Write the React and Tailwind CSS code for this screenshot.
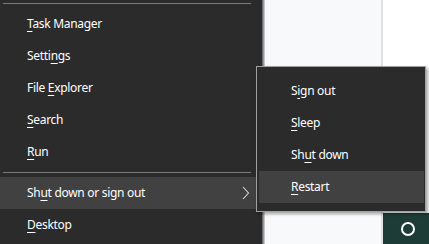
import React from 'react'

// a menu label with one underlined access key
function Label({ text, keyIndex }) {
  return (
    <span>
      {text.slice(0, keyIndex)}
      <span className="underline underline-offset-[3px] decoration-1">{text[keyIndex]}</span>
      {text.slice(keyIndex + 1)}
    </span>
  )
}

const mainItems = [
  { text: 'Task Manager', k: 0 },
  { text: 'Settings', k: 5 },
  { text: 'File Explorer', k: 5 },
  { text: 'Search', k: 0 },
  { text: 'Run', k: 0 },
]

const subItems = [
  { text: 'Sign out', k: 1 },
  { text: 'Sleep', k: 0 },
  { text: 'Shut down', k: 2 },
  { text: 'Restart', k: 0, active: true },
]

export default function App() {
  return (
    <div
      className="relative w-[429px] h-[244px] overflow-hidden bg-white text-white text-[12px] tracking-[-0.3px]"
      style={{ fontFamily: '"Noto Sans", "Open Sans", sans-serif' }}
    >
      <div className="flex h-full">
        {/* main context menu */}
        <div className="w-[262px] h-full bg-[#2b2b2b] flex flex-col">
          <div className="h-px bg-[#7a7a7a] mt-[3px] ml-[3px] w-[248px]" />
          <div className="pt-[4px]">
            {mainItems.map(i => (
              <div key={i.text} className="h-[32px] flex items-center pl-[27px]">
                <Label text={i.text} keyIndex={i.k} />
              </div>
            ))}
          </div>
          <div className="h-px bg-[#7a7a7a] mt-[4px] ml-[3px] w-[248px]" />
          <div className="mt-[4px] h-[32px] flex items-center pl-[27px] bg-[#414141]">
            <Label text="Shut down or sign out" keyIndex={2} />
            <div className="flex-1" />
            <svg width="8" height="14" viewBox="0 0 8 14" className="mr-[12px]">
              <polyline points="1,1 6.5,7 1,13" fill="none" stroke="#d8d8d8" strokeWidth="1.1" />
            </svg>
          </div>
          <div className="h-[32px] flex items-center pl-[27px]">
            <Label text="Desktop" keyIndex={0} />
          </div>
        </div>

        {/* window behind, light strip */}
        <div className="w-[121px] h-full flex">
          <div className="w-[3px] bg-gradient-to-r from-[#5a5a5a] to-[#dcdcdc]" />
          <div className="flex-1 bg-[#f8f9fa]" />
          <div className="w-[2px] bg-[#e2e2e2]" />
        </div>

        <div className="flex-1 flex flex-col">
          <div className="flex-1 bg-white" />
          <div className="h-[31px] bg-[#1d3b37] flex items-center justify-center pl-[3px]">
            <div className="w-[14px] h-[14px] rounded-full border-2 border-white" />
          </div>
        </div>
      </div>

      {/* submenu */}
      <div className="absolute left-[256px] top-[66px] w-[170px] h-[146px] bg-[#2b2b2b] border border-[#a0a0a0] shadow-[2px_2px_3px_rgba(0,0,0,0.35)] pt-[8px]">
        {subItems.map(i => (
          <div
            key={i.text}
            className={`h-[32px] flex items-center pl-[32px] ml-[2px] mr-px ${i.active ? 'bg-[#414141]' : ''}`}
          >
            <Label text={i.text} keyIndex={i.k} />
          </div>
        ))}
      </div>
    </div>
  )
}
